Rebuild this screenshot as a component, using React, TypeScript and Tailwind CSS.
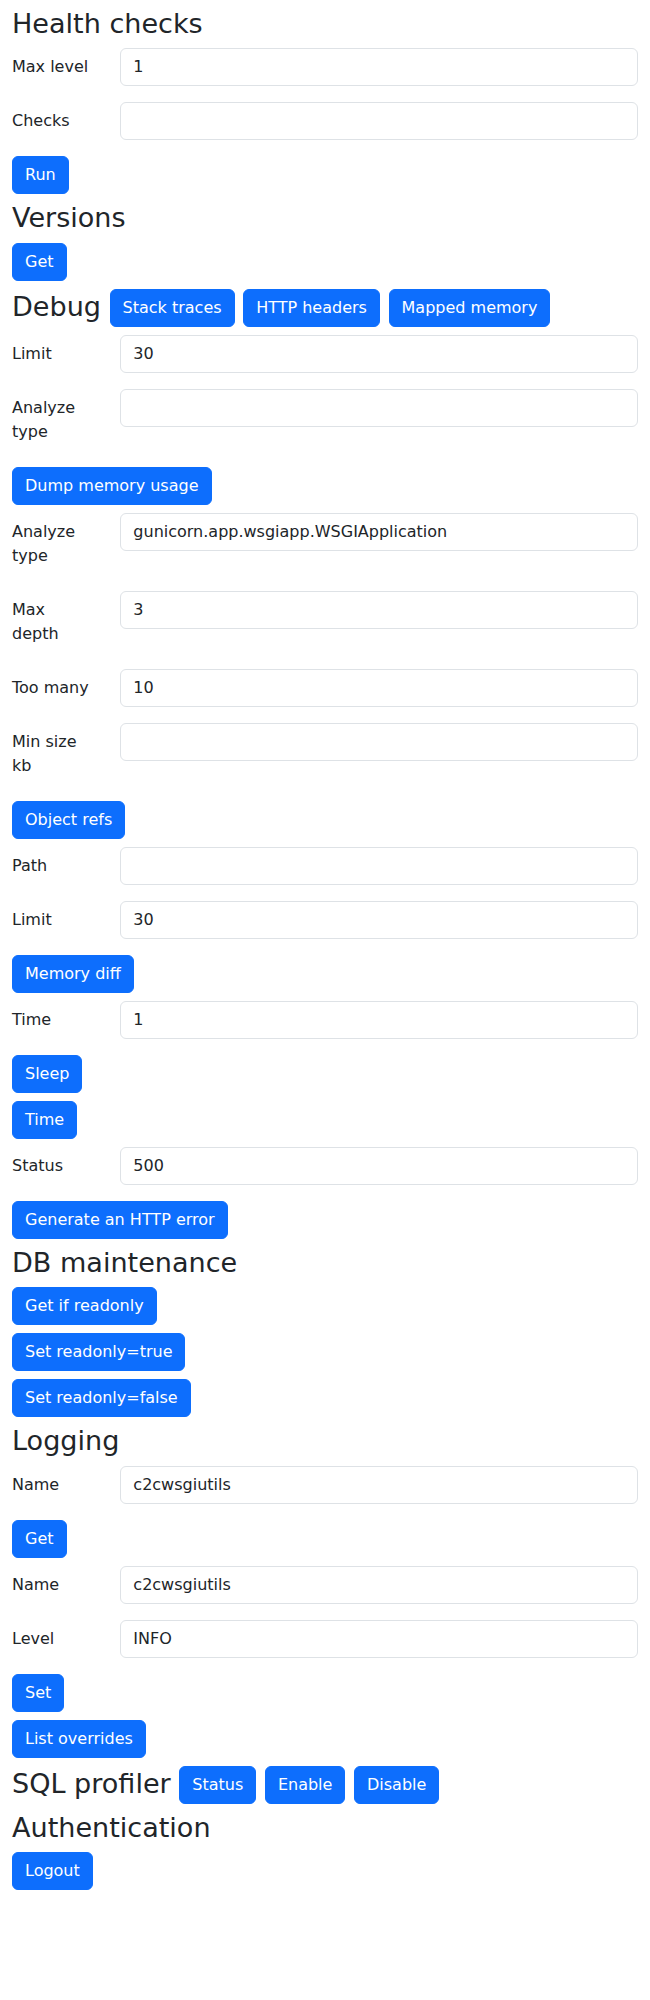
import React from "react";

const btn =
  "inline-block align-middle px-3 py-1.5 text-base leading-6 font-normal text-white bg-[#0d6efd] border border-[#0d6efd] rounded-[6px] text-center";

const H2 = ({ children }: { children: React.ReactNode }) => (
  <h2 className="text-[27.05px] leading-[1.2] font-normal mb-2 text-[#212529]">{children}</h2>
);

const Btn = ({ children }: { children: React.ReactNode }) => (
  <div className="flex mb-2">
    <button className={btn}>{children}</button>
  </div>
);

const Field = ({ label, value }: { label: string; value?: string }) => (
  <div className="flex flex-wrap -mx-3 mb-4">
    <label className="w-1/6 px-3 py-[7px] text-base leading-6 text-[#212529]">{label}</label>
    <div className="w-5/6 px-3">
      <input
        type="text"
        defaultValue={value ?? ""}
        className="block w-full px-3 py-1.5 text-base leading-6 text-[#212529] bg-white border border-[#dee2e6] rounded-[6px] outline-none"
      />
    </div>
  </div>
);

export default function App() {
  return (
    <div
      className="px-3 pt-2 bg-white text-[#212529] text-base leading-6 min-h-[2000px]"
      style={{ fontFamily: '"DejaVu Sans", sans-serif' }}
    >
      <H2>Health checks</H2>
      <Field label="Max level" value="1" />
      <Field label="Checks" />
      <Btn>Run</Btn>

      <H2>Versions</H2>
      <Btn>Get</Btn>

      <H2>
        Debug{" "}<button className={btn}>Stack traces</button>{" "}<button className={btn}>HTTP headers</button>{" "}<button className={btn}>Mapped memory</button>
      </H2>
      <Field label="Limit" value="30" />
      <Field label="Analyze type" />
      <Btn>Dump memory usage</Btn>
      <Field label="Analyze type" value="gunicorn.app.wsgiapp.WSGIApplication" />
      <Field label="Max depth" value="3" />
      <Field label="Too many" value="10" />
      <Field label="Min size kb" />
      <Btn>Object refs</Btn>
      <Field label="Path" />
      <Field label="Limit" value="30" />
      <Btn>Memory diff</Btn>
      <Field label="Time" value="1" />
      <Btn>Sleep</Btn>
      <Btn>Time</Btn>
      <Field label="Status" value="500" />
      <Btn>Generate an HTTP error</Btn>

      <H2>DB maintenance</H2>
      <Btn>Get if readonly</Btn>
      <Btn>Set readonly=true</Btn>
      <Btn>Set readonly=false</Btn>

      <H2>Logging</H2>
      <Field label="Name" value="c2cwsgiutils" />
      <Btn>Get</Btn>
      <Field label="Name" value="c2cwsgiutils" />
      <Field label="Level" value="INFO" />
      <Btn>Set</Btn>
      <Btn>List overrides</Btn>

      <H2>
        SQL profiler{" "}<button className={btn}>Status</button>{" "}<button className={btn}>Enable</button>{" "}<button className={btn}>Disable</button>
      </H2>

      <H2>Authentication</H2>
      <Btn>Logout</Btn>
    </div>
  );
}
